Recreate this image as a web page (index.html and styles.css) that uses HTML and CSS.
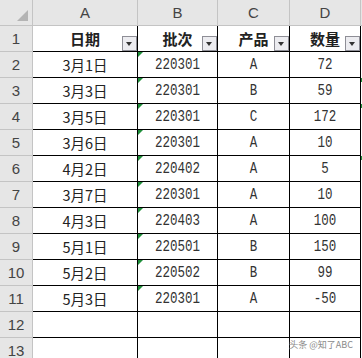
FILE: index.html
```html
<!DOCTYPE html>
<html lang="zh">
<head>
<meta charset="utf-8">
<link rel="stylesheet" href="styles.css">
</head>
<body>
<div class="sheet">
  <div class="corner"><span class="tri"></span></div>
  <div class="ch">A</div><div class="ch">B</div><div class="ch">C</div><div class="ch">D</div><div class="ch ch-e"></div>

  <div class="rh">1</div>
  <div class="c hd">日期<span class="flt"></span></div>
  <div class="c hd">批次<span class="flt"></span></div>
  <div class="c hd">产品<span class="flt"></span></div>
  <div class="c hd">数量<span class="flt"></span></div>
  <div class="e"></div>

  <div class="rh">2</div><div class="c dt">3月1日</div><div class="c num g"><span>220301</span></div><div class="c num"><span>A</span></div><div class="c num"><span>72</span></div><div class="e"></div>
  <div class="rh">3</div><div class="c dt">3月3日</div><div class="c num g"><span>220301</span></div><div class="c num"><span>B</span></div><div class="c num"><span>59</span></div><div class="e ge"></div>
  <div class="rh">4</div><div class="c dt">3月5日</div><div class="c num g"><span>220301</span></div><div class="c num"><span>C</span></div><div class="c num"><span>172</span></div><div class="e ge"></div>
  <div class="rh">5</div><div class="c dt">3月6日</div><div class="c num g"><span>220301</span></div><div class="c num"><span>A</span></div><div class="c num"><span>10</span></div><div class="e"></div>
  <div class="rh">6</div><div class="c dt">4月2日</div><div class="c num g"><span>220402</span></div><div class="c num"><span>A</span></div><div class="c num"><span>5</span></div><div class="e ge"></div>
  <div class="rh">7</div><div class="c dt">3月7日</div><div class="c num g"><span>220301</span></div><div class="c num"><span>A</span></div><div class="c num"><span>10</span></div><div class="e"></div>
  <div class="rh">8</div><div class="c dt">4月3日</div><div class="c num g"><span>220403</span></div><div class="c num"><span>A</span></div><div class="c num"><span>100</span></div><div class="e"></div>
  <div class="rh">9</div><div class="c dt">5月1日</div><div class="c num g"><span>220501</span></div><div class="c num"><span>B</span></div><div class="c num"><span>150</span></div><div class="e"></div>
  <div class="rh">10</div><div class="c dt">5月2日</div><div class="c num g"><span>220502</span></div><div class="c num"><span>B</span></div><div class="c num"><span>99</span></div><div class="e"></div>
  <div class="rh">11</div><div class="c dt">5月3日</div><div class="c num g"><span>220301</span></div><div class="c num"><span>A</span></div><div class="c num"><span>-50</span></div><div class="e"></div>
  <div class="rh">12</div><div class="c"></div><div class="c"></div><div class="c"></div><div class="c"></div><div class="e"></div>
  <div class="rh">13</div><div class="c"></div><div class="c"></div><div class="c"></div><div class="c"></div><div class="e"></div>
</div>
<div class="wm">头条 @知了ABC</div>
</body>
</html>
```

FILE: styles.css
```css
html, body {
  margin: 0;
  padding: 0;
  background: #fff;
  overflow: hidden;
}
body {
  position: relative;
  width: 362px;
  height: 358px;
}
.sheet {
  display: grid;
  grid-template-columns: 33px 105px 80px 72px 71px 1px;
  grid-template-rows: 26px;
  grid-auto-rows: 26px;
  font-family: "Noto Sans CJK SC", sans-serif;
  color: #222;
}
.corner {
  position: relative;
  background: #e6e6e6;
  border-right: 1px solid #c4c4c4;
  border-bottom: 1px solid #c4c4c4;
}
.corner .tri {
  position: absolute;
  right: 4px;
  bottom: 4px;
  width: 0;
  height: 0;
  border-left: 11px solid transparent;
  border-bottom: 11px solid #b4b4b4;
}
.ch {
  background: #e6e6e6;
  border-right: 1px solid #c4c4c4;
  border-bottom: 1px solid #c4c4c4;
  display: flex;
  align-items: center;
  justify-content: center;
  font-family: "Liberation Sans", sans-serif;
  font-size: 15px;
  color: #444;
}
.ch-e {
  border-right: 0;
}
.rh {
  background: #e6e6e6;
  border-right: 1px solid #c4c4c4;
  border-bottom: 1px solid #c4c4c4;
  display: flex;
  align-items: center;
  justify-content: center;
  font-family: "Liberation Sans", sans-serif;
  font-size: 15px;
  color: #444;
}
.c {
  position: relative;
  border-right: 1px solid #000;
  border-bottom: 1px solid #000;
  display: flex;
  align-items: center;
  justify-content: center;
}
.e {
  position: relative;
}
.ge::before {
  content: "";
  position: absolute;
  left: 0;
  top: 0;
  width: 1px;
  height: 4px;
  background: #1f8f3a;
}
.hd {
  font-weight: 700;
  font-size: 15px;
  color: #222;
}
.flt {
  position: absolute;
  right: 0;
  bottom: 0;
  width: 13px;
  height: 13px;
  border: 1px solid #8e8e96;
  background: #ececf0;
}
.flt::after {
  content: "";
  position: absolute;
  left: 3px;
  top: 5px;
  width: 0;
  height: 0;
  border-left: 3.5px solid transparent;
  border-right: 3.5px solid transparent;
  border-top: 4px solid #333;
}
.dt {
  font-size: 14.5px;
  color: #222;
}
.num {
  font-family: "Liberation Mono", monospace;
  font-size: 12.5px;
  color: #333;
}
.num span {
  display: inline-block;
  transform: scaleY(1.3);
}
.g::before {
  content: "";
  position: absolute;
  left: 0;
  top: 0;
  width: 0;
  height: 0;
  border-top: 5px solid #1f8f3a;
  border-right: 5px solid transparent;
}
.wm {
  position: absolute;
  right: 9px;
  bottom: 7px;
  font-family: "Noto Sans CJK SC", sans-serif;
  font-size: 9px;
  color: #8a8a8a;
  text-shadow: 0 0 2px #fff, 0 0 2px #fff;
}
```
